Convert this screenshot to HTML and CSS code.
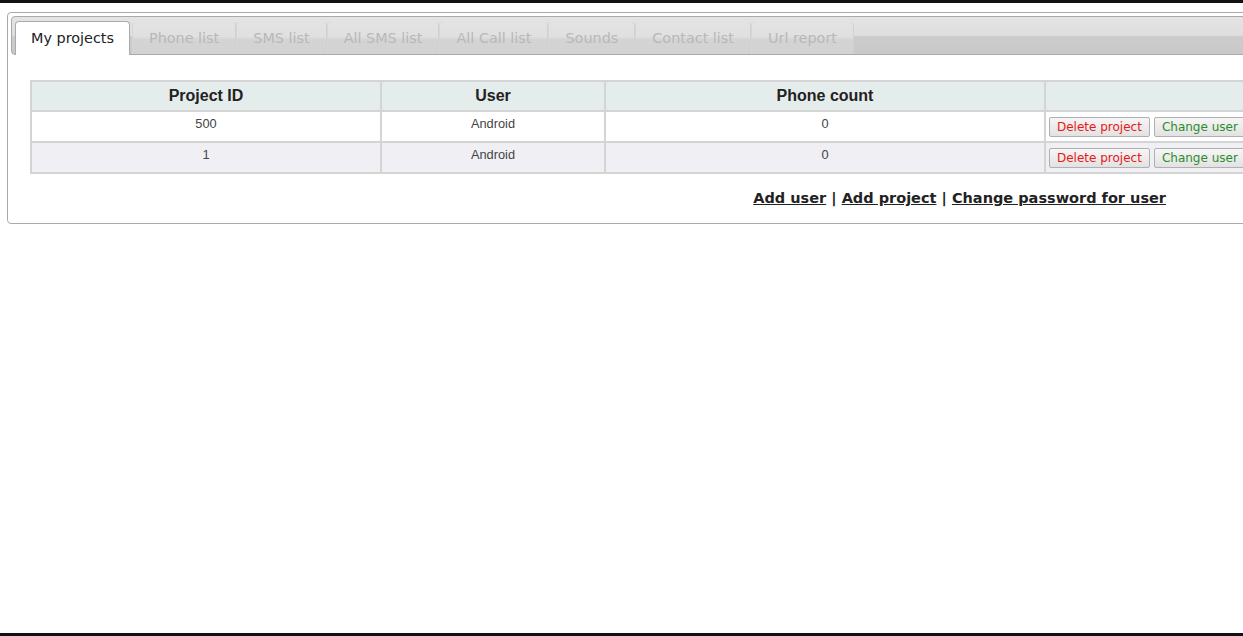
FILE: index.html
```html
<!DOCTYPE html>
<html lang="en">
<head>
<meta charset="utf-8">
<title>My projects</title>
<link rel="stylesheet" href="styles.css">
</head>
<body>
<div class="page">
  <div class="tabs">
    <ul class="tab-nav">
      <li class="tab active"><a>My projects</a></li>
      <li class="tab"><a>Phone list</a></li>
      <li class="tab"><a>SMS list</a></li>
      <li class="tab"><a>All SMS list</a></li>
      <li class="tab"><a>All Call list</a></li>
      <li class="tab"><a>Sounds</a></li>
      <li class="tab"><a>Contact list</a></li>
      <li class="tab"><a>Url report</a></li>
    </ul>
    <div class="panel">
      <table class="grid">
        <thead>
          <tr>
            <th class="c-id">Project ID</th>
            <th class="c-user">User</th>
            <th class="c-count">Phone count</th>
            <th class="c-act"></th>
          </tr>
        </thead>
        <tbody>
          <tr>
            <td>500</td>
            <td>Android</td>
            <td>0</td>
            <td class="act"><button class="btn del">Delete project</button><button class="btn chg">Change user</button></td>
          </tr>
          <tr class="alt">
            <td>1</td>
            <td>Android</td>
            <td>0</td>
            <td class="act"><button class="btn del">Delete project</button><button class="btn chg">Change user</button></td>
          </tr>
        </tbody>
      </table>
      <div class="links">
        <a href="#">Add user</a> | <a href="#">Add project</a> | <a href="#">Change password for user</a>
      </div>
    </div>
  </div>
</div>
<div class="footer-bar"></div>
</body>
</html>
```
FILE: styles.css
```css
html, body {
  height: 100%;
  margin: 0;
  overflow: hidden;
}
body {
  display: flex;
  flex-direction: column;
  background: #fff;
  border-top: 3px solid #111;
  box-sizing: border-box;
  font-family: "DejaVu Sans", Verdana, sans-serif;
}
.page {
  flex: 1;
  padding: 9px 0 0 7px;
}
.footer-bar {
  height: 3px;
  background: #111;
  flex: none;
}
.tabs {
  width: 1400px;
  border: 1px solid #aaa;
  border-radius: 4px;
  padding: 3px;
  background: #fff;
}
.tab-nav {
  list-style: none;
  margin: 0;
  padding: 4px 3px 0;
  display: flex;
  align-items: flex-end;
  border: 1px solid #aaa;
  border-radius: 4px;
  background: linear-gradient(to bottom, #e4e4e4 0%, #dedede 50%, #cccccc 52%, #c9c9c9 100%);
  height: 33px;
}
.tab {
  margin: 0;
  border: 1px solid transparent;
  border-left-color: #d6d6d6;
  border-right-color: #d0d0d0;
  border-top: 0;
  border-bottom: 0;
  border-radius: 4px 4px 0 0;
  background: linear-gradient(to bottom, #e3e3e3 0%, #e0e0e0 45%, #d4d4d4 55%, #d2d2d2 100%);
  height: 32px;
  box-sizing: border-box;
}
.tab a {
  display: block;
  padding: 8px 16px 6px;
  font-size: 14.4px;
  line-height: 17px;
  color: #b8b8b8;
}
.tab.active {
  background: #fff;
  border: 1px solid #aaa;
  border-bottom: 0;
  margin-right: 2px;
  margin-bottom: -1px;
  height: 34px;
}
.tab.active a {
  color: #222;
  padding-top: 8px;
  padding-left: 15px;
  padding-right: 15px;
}
.panel {
  padding: 25px 0 0 19px;
}
.grid {
  border-collapse: collapse;
  border: 2px solid #d4d4d4;
  font-family: "Liberation Sans", Arial, sans-serif;
  table-layout: fixed;
  width: 1300px;
}
.c-id { width: 348px; }
.c-user { width: 222px; }
.c-count { width: 438px; }
.grid th {
  background: #e5ecec;
  border: 2px solid #d4d4d4;
  font-size: 16px;
  font-weight: bold;
  color: #222;
  height: 28px;
  padding: 0;
}
.grid td {
  border: 2px solid #d4d4d4;
  font-size: 12.8px;
  color: #444;
  text-align: center;
  vertical-align: top;
  height: 31px;
  padding: 4px 0 0;
  box-sizing: border-box;
}
.grid tr.alt td {
  background: #efeff4;
}
.grid td.act {
  text-align: left;
  padding: 5px 0 0 3px;
}
.btn {
  font-family: "DejaVu Sans", Verdana, sans-serif;
  font-size: 12px;
  padding: 2px 7px;
  margin-right: 4px;
  border: 1px solid #b0b0b0;
  border-radius: 2px;
  background: linear-gradient(to bottom, #f6f6f6, #e2e2e2);
  line-height: 14px;
}
.btn.del { color: #e81818; }
.btn.chg { color: #2c8c2c; }
.links {
  width: 1136px;
  text-align: right;
  margin-top: 14px;
  padding-bottom: 12px;
  font-size: 14.5px;
  line-height: 20px;
  font-weight: bold;
  color: #222;
}
.links a {
  color: #222;
}
```
